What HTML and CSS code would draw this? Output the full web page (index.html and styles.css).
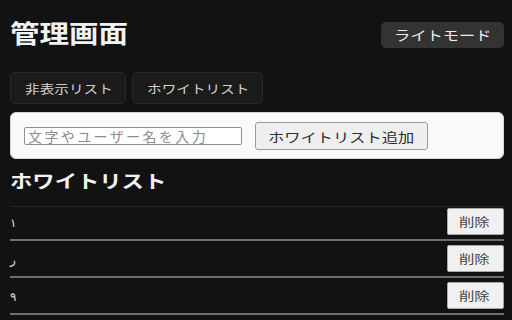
FILE: index.html
```html
<!DOCTYPE html>
<html lang="ja">
<head>
<meta charset="utf-8">
<title>管理画面</title>
<link rel="stylesheet" href="styles.css">
</head>
<body>
<div class="page">
  <header class="header">
    <h1 class="title"><span class="wide">管理画面</span></h1>
    <button class="mode-btn"><span class="wide">ライトモード</span></button>
  </header>
  <nav class="tabs">
    <button class="tab"><span class="wide">非表示リスト</span></button>
    <button class="tab"><span class="wide">ホワイトリスト</span></button>
  </nav>
  <section class="panel">
    <input class="text-input" type="text" placeholder="文字やユーザー名を入力">
    <button class="add-btn"><span class="wide">ホワイトリスト追加</span></button>
  </section>
  <h2 class="heading"><span class="wide">ホワイトリスト</span></h2>
  <ul class="list">
    <li class="row"><span class="item">١</span><button class="del-btn"><span class="wide">削除</span></button></li>
    <li class="row"><span class="item">ر</span><button class="del-btn"><span class="wide">削除</span></button></li>
    <li class="row"><span class="item">٩</span><button class="del-btn"><span class="wide">削除</span></button></li>
  </ul>
</div>
</body>
</html>
```
FILE: styles.css
```css
html, body {
  margin: 0;
  padding: 0;
  background: #121212;
}
body {
  font-family: "Noto Sans CJK JP", "Noto Sans", sans-serif;
  color: #eeeeee;
}
.page {
  padding: 0 8px 0 10px;
}
.wide {
  display: inline-block;
  transform: scaleX(1.22);
  transform-origin: left center;
}
.header {
  display: flex;
  justify-content: space-between;
  align-items: flex-start;
  padding-top: 20px;
}
.title {
  margin: 0;
  font-size: 25px;
  line-height: 25px;
  font-weight: 700;
  color: #f2f2f2;
}
.title .wide {
  transform: scaleX(1.18);
}
.mode-btn {
  margin-top: 2px;
  height: 26px;
  width: 123px;
  padding: 0 0 0 13px;
  text-align: left;
  border: none;
  border-radius: 5px;
  background: #333333;
  color: #eeeeee;
  font-family: inherit;
  font-size: 13px;
  line-height: 26px;
}
.mode-btn .wide {
  transform: scaleX(1.25);
}
.tabs {
  display: flex;
  gap: 6px;
  margin-top: 24px;
}
.tab {
  box-sizing: border-box;
  height: 32px;
  padding: 0 0 0 14px;
  text-align: left;
  border: 1px solid #2a2a2a;
  border-radius: 5px;
  background: #1b1b1b;
  color: #d2d2d2;
  font-family: inherit;
  font-size: 12px;
}
.tab:first-child {
  width: 116px;
}
.tab:last-child {
  width: 131px;
}
.panel {
  display: flex;
  align-items: center;
  gap: 13px;
  margin-top: 8px;
  padding: 9px 13px 8px;
  background: #f9f9f9;
  border: 1px solid #d6d6d6;
  border-radius: 6px;
}
.text-input {
  box-sizing: border-box;
  width: 218px;
  height: 18px;
  margin: 0;
  padding: 0 3px;
  border: 1px solid #8f8f8f;
  border-radius: 2px;
  background: #ffffff;
  font-family: inherit;
  font-size: 14px;
  letter-spacing: 2.4px;
  color: #222;
}
.text-input::placeholder {
  color: #8c8c8c;
}
.add-btn {
  box-sizing: border-box;
  width: 173px;
  height: 28px;
  margin: 0;
  padding: 0 0 0 12px;
  text-align: left;
  border: 1px solid #9a9a9a;
  border-radius: 3px;
  background: #efefef;
  color: #2e2e2e;
  font-family: inherit;
  font-size: 13px;
}
.add-btn .wide {
  transform: scaleX(1.25);
}
.heading {
  margin: 11px 0 16px;
  font-size: 18px;
  line-height: 20px;
  font-weight: 700;
  color: #f2f2f2;
}
.heading .wide {
  transform: scaleX(1.24);
}
.list {
  list-style: none;
  margin: 0;
  padding: 0;
  border-top: 1px solid #262626;
}
.row {
  display: flex;
  justify-content: space-between;
  align-items: center;
  padding: 4px 0;
  border-bottom: 2px solid #6e6e6e;
}
.row:first-child {
  padding-top: 1px;
}
.item {
  font-size: 12px;
  color: #dddddd;
}
.del-btn {
  box-sizing: border-box;
  width: 57px;
  height: 27px;
  margin: 0;
  padding: 0 0 0 11px;
  text-align: left;
  border: 1px solid #a8a8a8;
  border-radius: 2px;
  background: #f0f0f0;
  color: #444444;
  font-family: inherit;
  font-size: 12px;
}
.del-btn .wide {
  transform: scaleX(1.28);
}
```
